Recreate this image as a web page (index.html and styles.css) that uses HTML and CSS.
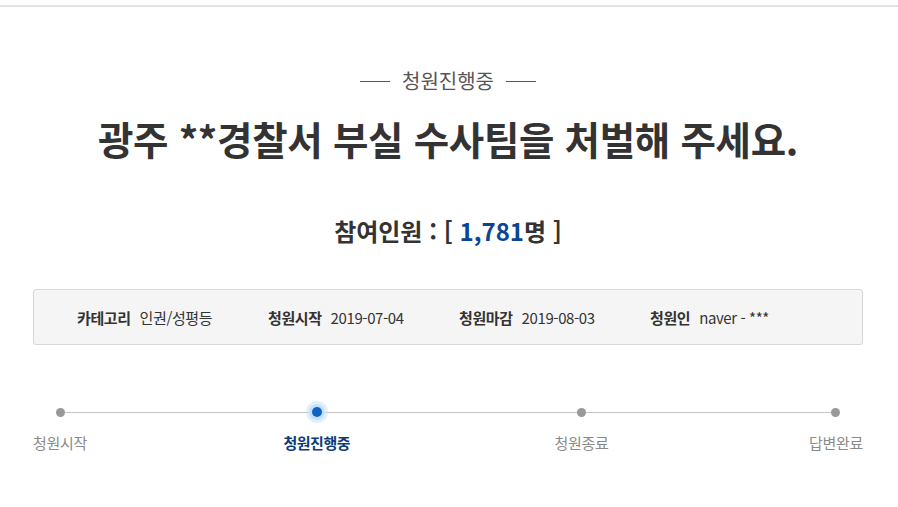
FILE: index.html
```html
<!DOCTYPE html>
<html lang="ko">
<head>
<meta charset="utf-8">
<link rel="stylesheet" href="styles.css">
</head>
<body>
<div class="topline"></div>
<div class="wrap">
  <div class="status"><span class="dash"></span><span>청원진행중</span><span class="dash"></span></div>
  <h1 class="title">광주 **경찰서 부실 수사팀을 처벌해 주세요.</h1>
  <div class="count">참여인원 : [ <span class="num">1,781</span>명 ]</div>
  <ul class="info">
    <li><b>카테고리</b><span>인권/성평등</span></li>
    <li><b>청원시작</b><span>2019-07-04</span></li>
    <li><b>청원마감</b><span>2019-08-03</span></li>
    <li><b>청원인</b><span>naver - ***</span></li>
  </ul>
  <div class="steps">
    <div class="track"></div>
    <div class="step"><i class="dot"></i><span>청원시작</span></div>
    <div class="step active"><i class="dot"></i><span>청원진행중</span></div>
    <div class="step"><i class="dot"></i><span>청원종료</span></div>
    <div class="step"><i class="dot"></i><span>답변완료</span></div>
  </div>
</div>
</body>
</html>
```
FILE: styles.css
```css
* { box-sizing: border-box; }
html, body { margin: 0; padding: 0; background: #fff; }
body {
  font-family: "Noto Sans CJK KR", "Noto Sans", sans-serif;
  color: #333;
  padding-top: 5px;
}
.topline { height: 2px; background: #e2e2e2; }
.wrap { width: 830px; margin: 0 0 0 33px; }
.status {
  margin-top: 60px;
  display: flex; justify-content: center; align-items: center; gap: 12px;
  font-size: 20px; color: #555; line-height: 28px;
}
.dash { width: 30px; height: 1px; background: #555; }
.title {
  margin: 18px 0 0;
  text-align: center;
  font-size: 38.5px; font-weight: 700; color: #333; line-height: 50px;
  letter-spacing: -0.3px;
}
.count {
  margin-top: 51px;
  text-align: center; font-size: 24px; font-weight: 700; color: #333; line-height: 34px;
}
.count .num { color: #0b4596; }
.info {
  list-style: none; margin: 41px 0 0; padding: 0 0 0 43px;
  height: 56px;
  display: flex; align-items: center;
  background: #f5f5f5; border: 1px solid #d8d8d8; border-radius: 3px;
  font-size: 15px; color: #333;
}
.info li { width: 191px; display: flex; gap: 9px; white-space: nowrap; letter-spacing: -0.4px; }
.info b { font-weight: 700; }
.steps {
  position: relative;
  margin-top: 62px;
  display: flex; justify-content: space-between;
}
.track { position: absolute; left: 26px; right: 27px; top: 5px; height: 1px; background: #c4c4c4; }
.step { position: relative; display: flex; flex-direction: column; align-items: center; gap: 15px; }
.dot { display: block; width: 9px; height: 9px; border-radius: 50%; background: #999; margin-top: 1px; }
.step span { font-size: 15px; color: #8a8a8a; line-height: 22px; letter-spacing: -0.3px; }
.step.active { transform: translateX(-4px); }
.step.active .dot { width: 10px; height: 10px; margin-top: 0; background: #0f62c2; box-shadow: 0 0 0 3px #c6e0fa, 0 0 0 6px rgba(198,224,250,0.5); }
.step.active span { color: #0b3b79; font-weight: 700; letter-spacing: -0.5px; }
```
